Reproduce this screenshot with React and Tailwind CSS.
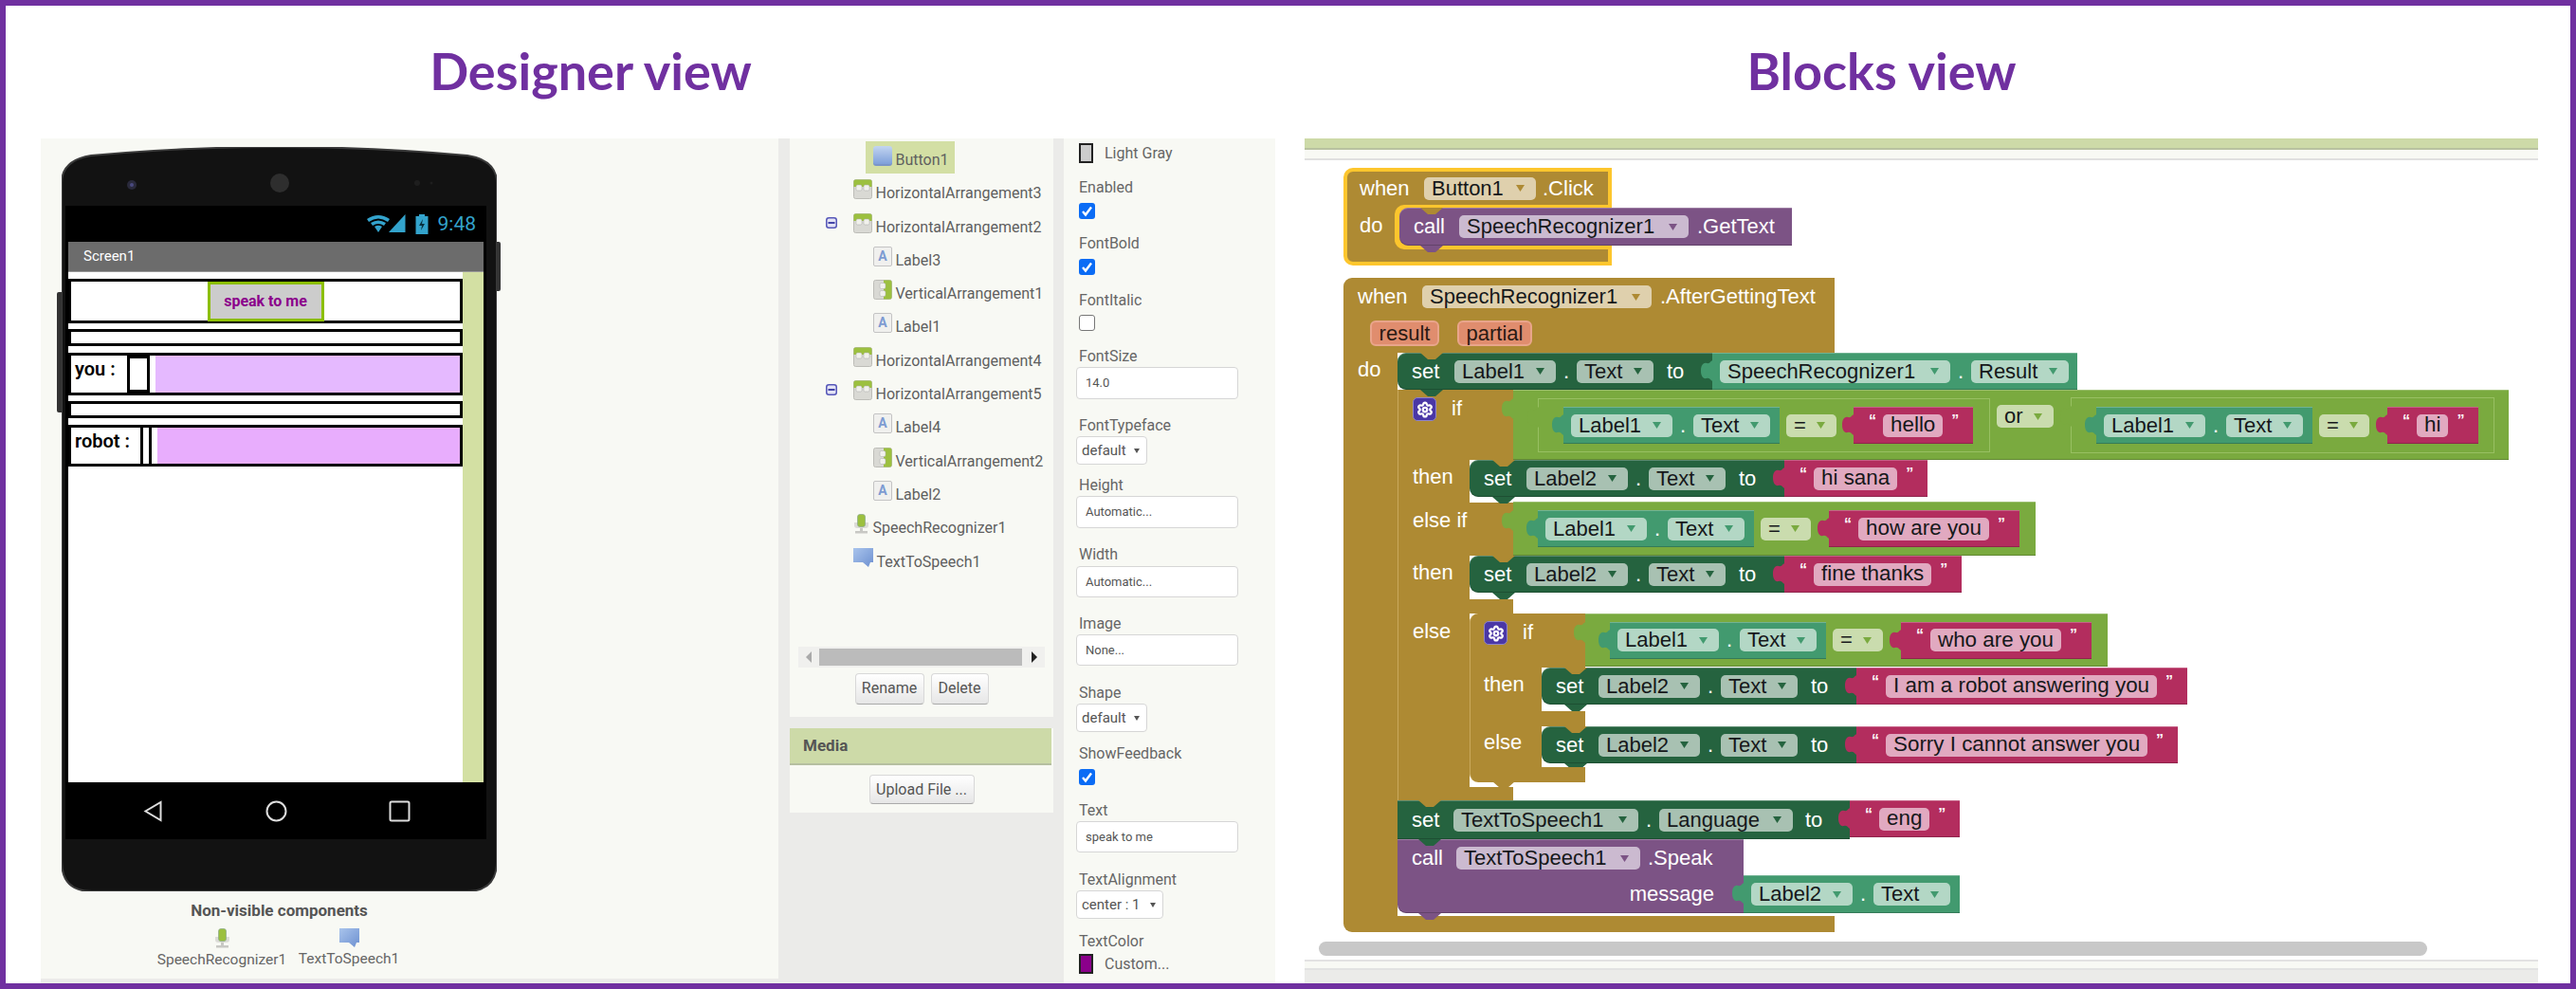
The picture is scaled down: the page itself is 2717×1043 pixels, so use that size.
import { Settings } from 'lucide-react';

const FIELD_TONES = {
  event: { bg: 'bg-[#dfd0ad]', fill: 'fill-[#ae8a33]' },
  call: { bg: 'bg-[#cbbad0]', fill: 'fill-[#7c5385]' },
  set: { bg: 'bg-[#a8c1b2]', fill: 'fill-[#25633f]' },
  get: { bg: 'bg-[#b3d7c5]', fill: 'fill-[#429a6f]' },
  logic: { bg: 'bg-[#cadcae]', fill: 'fill-[#7aaa3f]' },
};

const TAB_FILLS = {
  get: 'fill-[#429a6f]',
  text: 'fill-[#b32d5e]',
  logic: 'fill-[#7aaa3f]',
};

const NOTCH_FILLS = {
  brown: 'fill-[#ae8a33]',
  set: 'fill-[#25633f]',
  call: 'fill-[#7c5385]',
};

const EDGE = 'shadow-[inset_0_1px_0_rgba(255,255,255,0.25),inset_0_-1px_0_rgba(0,0,0,0.2)]';

function Word({ className = '', children }) {
  return <span className={`flex h-[24px] shrink-0 items-center whitespace-nowrap leading-none text-white ${className}`}>{children}</span>;
}

function Dot() {
  return <span className="w-[22px] shrink-0 text-center leading-none text-white">.</span>;
}

function Field({ tone, className = '', children }) {
  const t = FIELD_TONES[tone];
  return (
    <div className={`flex h-[24px] shrink-0 items-center justify-between rounded-[5px] pl-[8px] pr-[12px] leading-none whitespace-nowrap text-[#16181a] ${t.bg} ${className}`}>
      <span>{children}</span>
      <svg width="9" height="7" viewBox="0 0 9 7" className={t.fill}>
        <polygon points="0,0 9,0 4.5,7" />
      </svg>
    </div>
  );
}

function Tab({ tone, className = '-left-[12px] top-[8px]' }) {
  return (
    <svg width="13" height="22" viewBox="0 0 13 22" className={`absolute ${TAB_FILLS[tone]} ${className}`}>
      <path d="M13 0 L13 22 C10 22 10 18 6 19 C2 20 0 16 0 11 C0 6 2 2 6 3 C10 4 10 0 13 0 Z" />
    </svg>
  );
}

function Notch({ tone, className }) {
  return (
    <svg width="24" height="7" viewBox="0 0 24 7" className={`absolute ${NOTCH_FILLS[tone]} ${className}`}>
      <polygon points="0,0 24,0 16,7 8,7" />
    </svg>
  );
}

function Gear() {
  return (
    <div className="flex h-[25px] w-[25px] shrink-0 items-center justify-center rounded-[5px] border border-[#8f84c8] bg-[#4a37a6]">
      <Settings size={18} strokeWidth={3} className="text-white" />
    </div>
  );
}

// Label1 . Text getter
function LabelText({ name, className = '' }) {
  return (
    <div className={`relative flex h-[39px] w-[228px] shrink-0 items-center bg-[#429a6f] pl-[8px] ${EDGE} ${className}`}>
      <Tab tone="get" />
      <Field tone="get" className="w-[107px]">{name}</Field>
      <Dot />
      <Field tone="get" className="w-[81px]">Text</Field>
    </div>
  );
}

function TextValue({ className = '', children }) {
  return (
    <div className={`relative flex h-[39px] shrink-0 items-center bg-[#b32d5e] pl-[16px] pr-[15px] ${EDGE} ${className}`}>
      <Tab tone="text" />
      <span className="mt-[-10px] w-[15px] text-[16px] leading-none font-bold text-white">“</span>
      <div className="flex h-[24px] items-center rounded-[5px] bg-[#e1a9c0] px-[8px] text-[22.4px] leading-none whitespace-nowrap text-[#16181a]">{children}</div>
      <span className="ml-[9px] mt-[-10px] w-[8px] text-[16px] leading-none font-bold text-white">”</span>
    </div>
  );
}

function SetLabel({ name }) {
  return (
    <div className={`relative flex h-[39px] w-[332px] shrink-0 items-center rounded-l-[9px] bg-[#25633f] pl-[15px] ${EDGE}`}>
      <Word className="w-[45px]">set</Word>
      <Field tone="set" className="w-[107px]">{name}</Field>
      <Dot />
      <Field tone="set" className="w-[81px]">Text</Field>
      <Word className="ml-[14px]">to</Word>
      <Notch tone="brown" className="left-[24px] top-0" />
      <Notch tone="set" className="-bottom-[7px] left-[24px]" />
    </div>
  );
}

function SetRow({ name, children }) {
  return (
    <div className="flex items-start">
      <SetLabel name={name} />
      <TextValue>{children}</TextValue>
    </div>
  );
}

function Equals({ className = '' }) {
  return <Field tone="logic" className={`w-[53px] ${className}`}>=</Field>;
}

function Compare({ label = 'Label1', children, valueClass = 'ml-[19px]' }) {
  return (
    <>
      <LabelText name={label} />
      <Equals className="ml-[7px]" />
      <TextValue className={valueClass}>{children}</TextValue>
    </>
  );
}

function Condition({ className = '', children }) {
  return (
    <div className={`relative flex w-[551px] shrink-0 items-center bg-[#7aaa3f] pl-[26px] ${EDGE} ${className}`}>
      <Tab tone="logic" className="-left-[12px] top-[9px]" />
      {children}
    </div>
  );
}

function Outline({ className, children }) {
  return (
    <div className={`relative flex shrink-0 items-center border border-[#98c062] pl-[26px] ${className}`}>
      <Tab tone="logic" className="-left-[12px] top-[8px]" />
      {children}
    </div>
  );
}

function Cell({ className, children }) {
  return <div className={`shrink-0 self-stretch border-l border-[#c9a85c] bg-[#ae8a33] pl-[14px] ${className}`}>{children}</div>;
}

function NestedIf() {
  return (
    <div className="flex flex-col">
      <div className="flex h-[57px] items-start">
        <Cell className="flex w-[122px] items-start gap-[16px] rounded-tl-[9px] pt-[8px]">
          <Gear />
          <Word>if</Word>
        </Cell>
        <Condition className="h-[56px]">
          <Compare>who are you</Compare>
        </Condition>
      </div>
      <div className="flex h-[46px] items-start">
        <Cell className="w-[76px] pt-[6px]"><Word>then</Word></Cell>
        <SetRow name="Label2">I am a robot answering you</SetRow>
      </div>
      <Cell className="h-[16px] w-[122px]" />
      <div className="flex h-[43px] items-start">
        <Cell className="w-[76px] pt-[5px]"><Word>else</Word></Cell>
        <SetRow name="Label2">Sorry I cannot answer you</SetRow>
      </div>
      <div className="relative h-[16px] w-[122px]">
        <Cell className="h-[16px] w-[122px] rounded-bl-[9px]" />
        <Notch tone="brown" className="-bottom-[6px] left-[24px]" />
      </div>
    </div>
  );
}

function IfStatement() {
  return (
    <div className="flex flex-col">
      <div className="flex h-[74px] items-start">
        <Cell className="flex w-[122px] items-start gap-[16px] pl-[15px] pt-[8px]">
          <Gear />
          <Word>if</Word>
        </Cell>
        <div className={`relative flex h-[74px] w-[1050px] shrink-0 items-start bg-[#7aaa3f] pl-[26px] pt-[8px] ${EDGE}`}>
          <Tab tone="logic" className="-left-[12px] top-[9px]" />
          <Outline className="mt-[1px] h-[57px] w-[477px]">
            <Compare valueClass="ml-[18px]">hello</Compare>
          </Outline>
          <Field tone="logic" className="ml-[7px] mt-[8px] w-[60px]">or</Field>
          <Outline className="ml-[18px] h-[59px] w-[447px]">
            <Compare>hi</Compare>
          </Outline>
        </div>
      </div>
      <div className="flex h-[45px] items-start">
        <Cell className="w-[76px] pl-[15px] pt-[6px]"><Word>then</Word></Cell>
        <SetRow name="Label2">hi sana</SetRow>
      </div>
      <div className="flex h-[56px] items-start">
        <Cell className="w-[122px] pl-[15px] pt-[7px]"><Word>else if</Word></Cell>
        <Condition className="-mt-[1px] h-[57px]">
          <Compare>how are you</Compare>
        </Condition>
      </div>
      <div className="flex h-[46px] items-start">
        <Cell className="w-[76px] pl-[15px] pt-[6px]"><Word>then</Word></Cell>
        <SetRow name="Label2">fine thanks</SetRow>
      </div>
      <Cell className="h-[15px] w-[122px]" />
      <div className="flex h-[183px] items-start">
        <Cell className="w-[76px] pl-[15px] pt-[7px]"><Word>else</Word></Cell>
        <NestedIf />
      </div>
      <Cell className="h-[14px] w-[122px]" />
    </div>
  );
}

function ClickEvent() {
  return (
    <div className="absolute left-[41px] top-[8px] h-[103px] w-[283px] rounded-l-[10px] border-[4px] border-[#fdc62d] bg-[#ae8a33]">
      <div className="flex h-[35px] items-center pl-[13px]">
        <Word className="w-[68px]">when</Word>
        <Field tone="event" className="w-[118px]">Button1</Field>
        <Word className="ml-[7px]">.Click</Word>
      </div>
      <div className="flex h-[47px]">
        <div className="w-[50px] shrink-0 pl-[13px] pt-[10px]"><Word>do</Word></div>
        <div className="-mr-[4px] min-w-0 flex-1 rounded-l-[10px] bg-[#fdc62d] pl-[5px] pt-[3px]">
          <div className={`relative flex h-[40px] w-[414px] items-center rounded-l-[9px] bg-[#7c5385] pl-[15px] ${EDGE}`}>
            <Word className="w-[48px]">call</Word>
            <Field tone="call" className="w-[242px]">SpeechRecognizer1</Field>
            <Word className="ml-[9px]">.GetText</Word>
            <Notch tone="brown" className="left-[22px] top-0" />
            <Notch tone="call" className="-bottom-[7px] left-[22px]" />
          </div>
        </div>
      </div>
    </div>
  );
}

function SpeechEvent() {
  return (
    <div className="absolute left-[41px] top-[124px] flex flex-col">
      <div className="h-[79px] w-[518px] rounded-tl-[9px] bg-[#ae8a33]">
        <div className="flex h-[40px] items-center pl-[15px]">
          <Word className="w-[68px]">when</Word>
          <Field tone="event" className="w-[242px]">SpeechRecognizer1</Field>
          <Word className="ml-[9px]">.AfterGettingText</Word>
        </div>
        <div className="ml-[28px] mt-[5px] flex gap-[19px] text-[#2a1a14]">
          <div className="flex h-[27px] w-[73px] items-center justify-center rounded-[6px] border-2 border-[#e9a58b] bg-[#e08d6e]">result</div>
          <div className="flex h-[27px] w-[79px] items-center justify-center rounded-[6px] border-2 border-[#e9a58b] bg-[#e08d6e]">partial</div>
        </div>
      </div>
      <div className="flex">
        <div className="w-[57px] shrink-0 bg-[#ae8a33] pl-[15px] pt-[6px]"><Word>do</Word></div>
        <div className="flex flex-col">
          <div className="flex items-start">
            <SetLabel name="Label1" />
            <div className={`relative flex h-[39px] w-[385px] shrink-0 items-center bg-[#429a6f] pl-[8px] ${EDGE}`}>
              <Tab tone="get" />
              <Field tone="get" className="w-[243px]">SpeechRecognizer1</Field>
              <Dot />
              <Field tone="get" className="w-[103px]">Result</Field>
            </div>
          </div>
          <IfStatement />
          <div className="flex items-start">
            <div className={`relative flex h-[41px] w-[477px] shrink-0 items-center bg-[#25633f] pl-[15px] ${EDGE}`}>
              <Word className="w-[44px]">set</Word>
              <Field tone="set" className="w-[195px]">TextToSpeech1</Field>
              <Dot />
              <Field tone="set" className="w-[141px]">Language</Field>
              <Word className="ml-[13px]">to</Word>
              <Notch tone="brown" className="left-[22px] top-0" />
            </div>
            <TextValue>eng</TextValue>
          </div>
          <div className="flex items-end">
            <div className={`relative h-[78px] w-[365px] shrink-0 rounded-bl-[9px] bg-[#7c5385] pl-[15px] ${EDGE}`}>
              <div className="flex h-[40px] items-center">
                <Word className="w-[47px]">call</Word>
                <Field tone="call" className="w-[194px]">TextToSpeech1</Field>
                <Word className="ml-[8px]">.Speak</Word>
              </div>
              <div className="flex h-[36px] items-center justify-end pr-[31px]"><Word>message</Word></div>
              <Notch tone="set" className="left-[22px] top-0" />
              <Notch tone="call" className="-bottom-[7px] left-[22px]" />
            </div>
            <LabelText name="Label2" className="h-[40px]" />
          </div>
          <div className="h-[3px]" />
        </div>
      </div>
      <div className="h-[17px] w-[518px] rounded-bl-[9px] bg-[#ae8a33]" />
    </div>
  );
}

function BlocksCanvas() {
  return (
    <div className="relative flex-1 overflow-hidden bg-white font-['Liberation_Sans',sans-serif] text-[22px]">
      <ClickEvent />
      <SpeechEvent />
      <div className="absolute bottom-[4px] left-[15px] h-[15px] w-[1169px] rounded-full bg-[#c8c8c8]" />
    </div>
  );
}

function ArrangementIcon() {
  return (
    <svg width="20" height="21" viewBox="0 0 20 21" className="shrink-0">
      <rect x="0.5" y="0.5" width="19" height="20" rx="2" fill="#d9d9d4" stroke="#bdbdb8" />
      <path d="M0.5 3 a2 2 0 0 1 2 -2.5 h15 a2 2 0 0 1 2 2.5 v5 h-19 z" fill="#9cc03f" />
      <rect x="3" y="6" width="6" height="6" rx="1.5" fill="#f1f1ec" stroke="#aaa" strokeWidth="0.5" />
      <rect x="11" y="6" width="6" height="6" rx="1.5" fill="#f1f1ec" stroke="#aaa" strokeWidth="0.5" />
    </svg>
  );
}

function VerticalIcon() {
  return (
    <svg width="20" height="21" viewBox="0 0 20 21" className="shrink-0">
      <rect x="0.5" y="0.5" width="19" height="20" rx="2" fill="#d9d9d4" stroke="#bdbdb8" />
      <path d="M11 0.5 h6.5 a2 2 0 0 1 2 2 v16 a2 2 0 0 1 -2 2 h-6.5 z" fill="#9cc03f" />
      <rect x="7" y="3.5" width="6" height="6" rx="1.5" fill="#f1f1ec" stroke="#aaa" strokeWidth="0.5" />
      <rect x="7" y="11.5" width="6" height="6" rx="1.5" fill="#f1f1ec" stroke="#aaa" strokeWidth="0.5" />
    </svg>
  );
}

function LabelIcon() {
  return (
    <div className="flex h-[21px] w-[20px] shrink-0 items-start justify-center rounded-[2px] border border-[#c4c4c4] bg-[#f0f0ee] text-[14px] leading-[18px] font-bold text-[#7d9bd2]">
      A
    </div>
  );
}

function ButtonIcon() {
  return <div className="h-[21px] w-[20px] shrink-0 rounded-[3px] border-b-2 border-[#7a95c8] bg-gradient-to-b from-[#c3d5f0] to-[#7fa0da]" />;
}

function MicIcon() {
  return (
    <svg width="17" height="21" viewBox="0 0 17 21" className="shrink-0">
      <path d="M1 9 v3 a3 3 0 0 0 3 3 h9 a3 3 0 0 0 3 -3 v-3 z" fill="#dcdcd8" />
      <rect x="7" y="15" width="3" height="3" fill="#c8c8c4" />
      <rect x="2" y="18" width="13" height="2.5" fill="#c8c8c4" />
      <rect x="4.5" y="0.5" width="8" height="13" rx="2.5" fill="#9cc03f" stroke="#8aa88a" strokeWidth="0.7" />
    </svg>
  );
}

function BubbleIcon() {
  return (
    <svg width="21" height="20" viewBox="0 0 21 20" className="shrink-0">
      <defs>
        <linearGradient id="bubble" x1="0" y1="0" x2="1" y2="1">
          <stop offset="0" stopColor="#a9c4ec" />
          <stop offset="1" stopColor="#6d90d0" />
        </linearGradient>
      </defs>
      <path d="M0 0 h21 v15 h-3 l-2 5 l-6 -5 h-10 z" fill="url(#bubble)" />
    </svg>
  );
}

function MinusIcon() {
  return (
    <svg width="12" height="12" viewBox="0 0 12 12" className="shrink-0">
      <rect x="0.75" y="0.75" width="10.5" height="10.5" rx="2.5" fill="#e4e4f5" stroke="#5657b8" strokeWidth="1.5" />
      <rect x="2.5" y="5" width="7" height="2" fill="#4445a8" />
    </svg>
  );
}

const TREE = [
  { name: 'Button1', icon: ButtonIcon, level: 2, selected: true },
  { name: 'HorizontalArrangement3', icon: ArrangementIcon, level: 1 },
  { name: 'HorizontalArrangement2', icon: ArrangementIcon, level: 1, open: true },
  { name: 'Label3', icon: LabelIcon, level: 2 },
  { name: 'VerticalArrangement1', icon: VerticalIcon, level: 2 },
  { name: 'Label1', icon: LabelIcon, level: 2 },
  { name: 'HorizontalArrangement4', icon: ArrangementIcon, level: 1 },
  { name: 'HorizontalArrangement5', icon: ArrangementIcon, level: 1, open: true },
  { name: 'Label4', icon: LabelIcon, level: 2 },
  { name: 'VerticalArrangement2', icon: VerticalIcon, level: 2 },
  { name: 'Label2', icon: LabelIcon, level: 2 },
  { name: 'SpeechRecognizer1', icon: MicIcon, level: 1 },
  { name: 'TextToSpeech1', icon: BubbleIcon, level: 1 },
];

function TreeRow({ item }) {
  const Icon = item.icon;
  return (
    <div className={`flex h-[35.3px] ${item.level === 2 ? 'pl-[80px]' : 'pl-[38px]'}`}>
      {item.level === 1 && (
        <div className="mt-[9px] w-[29px]">
          {item.open && <MinusIcon />}
        </div>
      )}
      <div className={`flex gap-[3.5px] ${item.level === 2 ? 'pl-[8px] pr-[6px]' : ''} ${item.selected ? 'h-[34px] bg-[#d3dfa4]' : ''}`}>
        <div className="mt-[5px]">
          <Icon />
        </div>
        <span className="mt-[10px] h-[20px] text-[16px] leading-[20px] whitespace-nowrap text-[#5f5f5f]">{item.name}</span>
      </div>
    </div>
  );
}

function GrayButton({ className, children }) {
  return (
    <div className={`flex items-center justify-center rounded-[4px] border border-[#d8d8d8] border-b-[#aaa] bg-gradient-to-b from-white to-[#e6e6e6] text-[16px] text-[#555] ${className}`}>
      {children}
    </div>
  );
}

function PropLabel({ className, children }) {
  return <div className={`ml-[16px] h-[20px] text-[16px] leading-[20px] whitespace-nowrap text-[#666] ${className}`}>{children}</div>;
}

function Checkbox({ className, checked = true }) {
  return (
    <div className={`ml-[16px] flex h-[17px] w-[17px] items-center justify-center rounded-[3px] ${checked ? 'bg-[#0b6cf5]' : 'border border-[#777] bg-white'} ${className}`}>
      {checked && (
        <svg width="13" height="13" viewBox="0 0 13 13">
          <path d="M2 7 L5 10.5 L11 2.5" fill="none" stroke="white" strokeWidth="2.4" />
        </svg>
      )}
    </div>
  );
}

function TextInput({ className, children }) {
  return (
    <div className={`ml-[13px] flex w-[171px] items-start rounded-[4px] border border-[#d6d6d6] bg-white pl-[9px] pt-[7px] text-[13px] leading-[17px] text-[#555] ${className}`}>
      {children}
    </div>
  );
}

function SelectBox({ className, children }) {
  return (
    <div className={`ml-[13px] flex h-[30px] items-center justify-between rounded-[4px] border border-[#d6d6d6] bg-white pl-[5px] pr-[7px] text-[15px] text-[#555] ${className}`}>
      <span>{children}</span>
      <svg width="6" height="5" viewBox="0 0 6 5" className="fill-[#555]">
        <polygon points="0,0 6,0 3,5" />
      </svg>
    </div>
  );
}

function ColorRow({ className, swatch, children }) {
  return (
    <div className={`ml-[16px] flex items-center gap-[12px] ${className}`}>
      <div className={`h-[21px] w-[15px] border-[2px] border-[#222] ${swatch}`} />
      <span className="text-[16px] leading-none text-[#666]">{children}</span>
    </div>
  );
}

function Properties() {
  return (
    <div className="w-[223px] bg-[#f8f9f4]">
      <ColorRow className="mt-[5px]" swatch="bg-[#cccccc]">Light Gray</ColorRow>
      <PropLabel className="mt-[16px]">Enabled</PropLabel>
      <Checkbox className="mt-[6px]" />
      <PropLabel className="mt-[16px]">FontBold</PropLabel>
      <Checkbox className="mt-[6px]" />
      <PropLabel className="mt-[17px]">FontItalic</PropLabel>
      <Checkbox className="mt-[5px]" checked={false} />
      <PropLabel className="mt-[17px]">FontSize</PropLabel>
      <TextInput className="mt-[1px] h-[34px]">14.0</TextInput>
      <PropLabel className="mt-[18px]">FontTypeface</PropLabel>
      <SelectBox className="mt-[1px] w-[75px]">default</SelectBox>
      <PropLabel className="mt-[12px]">Height</PropLabel>
      <TextInput className="mt-[1px] h-[34px]">Automatic...</TextInput>
      <PropLabel className="mt-[18px]">Width</PropLabel>
      <TextInput className="mt-[2px] h-[33px]">Automatic...</TextInput>
      <PropLabel className="mt-[18px]">Image</PropLabel>
      <TextInput className="mt-[1px] h-[33px]">None...</TextInput>
      <PropLabel className="mt-[19px]">Shape</PropLabel>
      <SelectBox className="mt-[1px] w-[75px]">default</SelectBox>
      <PropLabel className="mt-[13px]">ShowFeedback</PropLabel>
      <Checkbox className="mt-[6px]" />
      <PropLabel className="mt-[17px]">Text</PropLabel>
      <TextInput className="mt-[1px] h-[33px]">speak to me</TextInput>
      <PropLabel className="mt-[19px]">TextAlignment</PropLabel>
      <SelectBox className="mt-[1px] w-[92px]">center : 1</SelectBox>
      <PropLabel className="mt-[14px]">TextColor</PropLabel>
      <ColorRow className="mt-[3px]" swatch="bg-[#8b008b]">Custom...</ColorRow>
    </div>
  );
}

function Middle() {
  return (
    <div className="w-[301px] bg-[#ebebe9] px-[12px]">
      <div className="h-[610px] w-[278px] bg-[#f8f9f4] pt-[3px]">
        {TREE.map((item) => (
          <TreeRow key={item.name} item={item} />
        ))}
        <div className="mx-[9px] mt-[74px] flex h-[22px] w-[260px] items-center bg-[#f0f0ee]">
          <svg width="22" height="12" viewBox="0 0 22 12" className="shrink-0">
            <polygon points="14,0 14,12 8,6" fill="#aaa" />
          </svg>
          <div className="h-[18px] w-[214px] bg-[#bbbbbb]" />
          <svg width="24" height="12" viewBox="0 0 24 12" className="shrink-0">
            <polygon points="10,0 10,12 16,6" fill="#222" />
          </svg>
        </div>
        <div className="mt-[6px] flex justify-center gap-[7px]">
          <GrayButton className="h-[33px] w-[73px]">Rename</GrayButton>
          <GrayButton className="h-[33px] w-[61px]">Delete</GrayButton>
        </div>
      </div>
      <div className="mt-[12px] h-[89px] w-[278px] bg-[#f8f9f4]">
        <div className="flex h-[39px] w-[276px] items-center border-b-2 border-[#b6bfa0] bg-[#cddaa8] pl-[14px] text-[17px] font-bold text-[#555]">Media</div>
        <div className="mt-[10px] flex justify-center">
          <GrayButton className="h-[31px] w-[111px]">Upload File ...</GrayButton>
        </div>
      </div>
    </div>
  );
}

function StatusIcons() {
  return (
    <div className="flex items-center pr-[11px]">
      <svg width="41" height="20" viewBox="0 0 41 20" className="fill-[#33a3cc]">
        <path d="M0 5 Q12 -3 24 5 L22 8 Q12 1 2 8 Z" />
        <path d="M4 9 Q12 4 20 9 L18 12 Q12 8 6 12 Z" />
        <path d="M8 13 Q12 10.5 16 13 L12 19 Z" />
        <polygon points="40.5,0 40.5,19 23,19" />
      </svg>
      <svg width="14" height="21" viewBox="0 0 14 21" className="ml-[10px]">
        <rect x="4" y="0" width="6" height="2" fill="#33a3cc" />
        <rect x="0.5" y="2" width="13" height="19" fill="#33a3cc" />
        <polygon points="8,5 4,12 7,12 6,17 10,10 7,10" fill="#08303f" />
      </svg>
      <span className="ml-[10px] text-[21px] leading-none text-[#33a3cc]">9:48</span>
    </div>
  );
}

function PhoneRow({ className, children }) {
  return <div className={`flex border-[3px] border-black bg-black ${className}`}>{children}</div>;
}

function Phone() {
  return (
    <div className="relative ml-[22px] mt-[9px] h-[785px] w-[459px]">
      <div className="absolute -right-[4px] top-[100px] h-[52px] w-[6px] rounded-r-[2px] bg-[#333]" />
      <div className="absolute -left-[5px] top-[153px] h-[127px] w-[7px] rounded-l-[2px] bg-[#333]" />
      <svg width="459" height="785" viewBox="0 0 459 785" className="absolute inset-0">
        <path
          d="M0 38 Q0 14 31 9 Q130 0 229 0 Q330 0 428 9 Q459 14 459 38 L459 753 Q459 785 427 785 L32 785 Q0 785 0 753 Z"
          fill="#121212"
          stroke="#3a3a3a"
          strokeWidth="2"
        />
        <circle cx="74" cy="40" r="5" fill="#2a2a3c" />
        <circle cx="74" cy="40" r="2" fill="#4a4a80" />
        <circle cx="230" cy="38" r="10" fill="#2e2e2e" />
        <circle cx="375" cy="38" r="3" fill="#1e1e1e" />
        <circle cx="390" cy="38" r="1.5" fill="#1e1e1e" />
      </svg>
      <div className="relative flex w-[459px] flex-col pl-[4px] pt-[62px]">
        <div className="flex h-[38px] w-[444px] items-center justify-end bg-black">
          <StatusIcons />
        </div>
        <div className="w-[444px] bg-black px-[3px]">
          <div className="flex h-[32px] items-center border-b border-[#999] bg-[#6c6c6c] pl-[16px] text-[15px] text-white">Screen1</div>
          <div className="flex h-[538px]">
            <div className="w-[416px] bg-white pt-[7px] text-[20px] leading-none font-semibold text-black">
              <div className="flex h-[47px] items-center justify-center border-[3px] border-black">
                <div className="flex h-[42px] w-[123px] items-center justify-center border-[3px] border-[#8cbf00] bg-[#cccccc] text-[16px] font-bold text-[#8b008b]">speak to me</div>
              </div>
              <div className="mt-[6px] h-[18px] border-[3px] border-black" />
              <PhoneRow className="mt-[7px] h-[45px]">
                <div className="w-[59px] bg-white pl-[4px] pt-[4px]">you :</div>
                <div className="ml-[3px] mt-[3px] h-[33px] w-[18px] bg-white" />
                <div className="ml-[3px] w-[6px] bg-white" />
                <div className="flex-1 bg-[#e5b9ff]" />
              </PhoneRow>
              <div className="mt-[6px] h-[18px] border-[3px] border-black" />
              <PhoneRow className="mt-[7px] h-[44px]">
                <div className="w-[73px] bg-white pl-[4px] pt-[4px]">robot :</div>
                <div className="ml-[3px] w-[6px] bg-white" />
                <div className="ml-[3px] w-[6px] bg-white" />
                <div className="flex-1 bg-[#e8adfd]" />
              </PhoneRow>
            </div>
            <div className="w-[22px] bg-[#d3e0a3]" />
          </div>
        </div>
        <div className="flex h-[60px] w-[444px] items-center bg-black pl-[82px]">
          <svg width="21" height="23" viewBox="0 0 21 23">
            <polygon points="18.5,2 18.5,21 2.5,11.5" fill="none" stroke="#ddd" strokeWidth="2" />
          </svg>
          <svg width="23" height="23" viewBox="0 0 23 23" className="ml-[108px]">
            <circle cx="11.5" cy="11.5" r="10" fill="none" stroke="#ddd" strokeWidth="2" />
          </svg>
          <svg width="23" height="23" viewBox="0 0 23 23" className="ml-[107px]">
            <rect x="1.5" y="1.5" width="20" height="20" rx="1.5" fill="none" stroke="#ddd" strokeWidth="2" />
          </svg>
        </div>
      </div>
    </div>
  );
}

function Designer() {
  return (
    <div className="flex w-[1302px] bg-[#ebebe9] font-['Roboto',sans-serif]">
      <div className="h-[886px] w-[778px] bg-[#f8f9f4]">
        <Phone />
        <div className="ml-[22px] mt-[10px] w-[459px] text-center text-[17px] leading-[20px] font-bold text-[#555]">Non-visible components</div>
        <div className="mt-[9px] flex pl-[121px] text-[15.5px] leading-[16px] text-[#666]">
          <div className="flex w-[140px] flex-col items-center gap-[4px]">
            <MicIcon />
            <span>SpeechRecognizer1</span>
          </div>
          <div className="ml-[11px] flex w-[106px] flex-col items-center gap-[4px]">
            <BubbleIcon />
            <span>TextToSpeech1</span>
          </div>
        </div>
      </div>
      <Middle />
      <Properties />
    </div>
  );
}

function Blocks() {
  return (
    <div className="flex w-[1301px] flex-col">
      <div className="h-[12px] border-b-2 border-[#b8c1a0] bg-[#cddaa8]" />
      <div className="h-[11px] border-b-2 border-[#e0e0e0] bg-[#f8f9f4]" />
      <BlocksCanvas />
      <div className="h-[11px] border-y-2 border-[#e2e2e2] bg-[#f8f9f4]" />
      <div className="h-[14px] bg-[#ebebe9]" />
    </div>
  );
}

export default function App() {
  return (
    <div className="h-[1043px] w-[2717px] overflow-hidden border-[6px] border-[#7030a0] bg-white font-['Lato',sans-serif]">
      <div className="flex h-[140px] items-center pb-[2px] text-[54px] leading-none font-bold text-[#7030a0]">
        <div className="w-[1234px] text-center">Designer view</div>
        <div className="flex-1 pl-[18px] text-center">Blocks view</div>
      </div>
      <div className="flex h-[891px] gap-[31px] pl-[37px]">
        <Designer />
        <Blocks />
      </div>
    </div>
  );
}
